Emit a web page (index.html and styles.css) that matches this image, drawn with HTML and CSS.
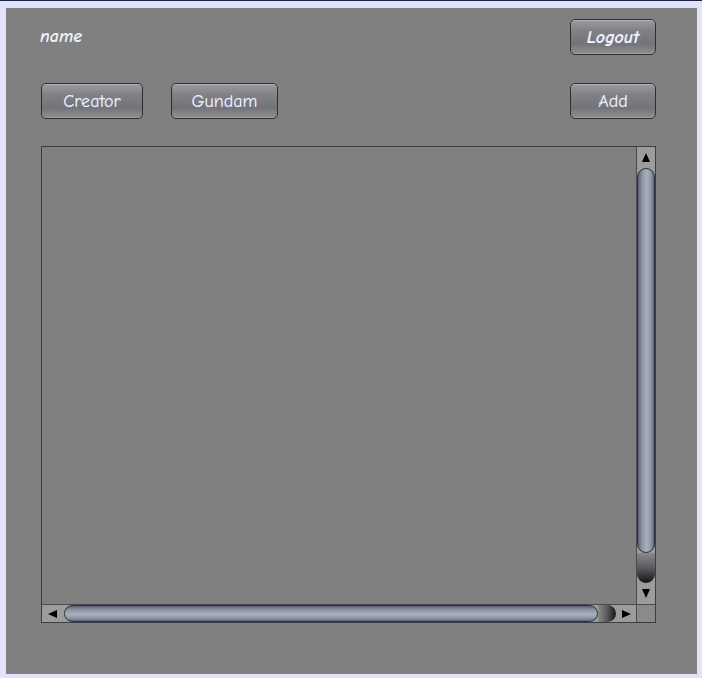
FILE: index.html
```html
<!DOCTYPE html>
<html>
<head>
<meta charset="utf-8">
<link rel="stylesheet" href="styles.css">
</head>
<body>
<div class="frame">
  <div class="panel">
    <div class="row top">
      <span class="name">name</span>
      <button class="btn btn-logout">Logout</button>
    </div>
    <div class="row second">
      <div class="left-btns">
        <button class="btn btn-creator">Creator</button>
        <button class="btn btn-gundam">Gundam</button>
      </div>
      <button class="btn btn-add">Add</button>
    </div>
    <div class="pane">
      <div class="view"></div>
      <div class="vbar">
        <div class="arrow-btn"><span class="tri up"></span></div>
        <div class="vtrack">
          <div class="vthumb"></div>
          <div class="vshade"></div>
        </div>
        <div class="arrow-btn"><span class="tri down"></span></div>
      </div>
      <div class="hbar">
        <div class="arrow-btn h"><span class="tri left"></span></div>
        <div class="htrack">
          <div class="hthumb"></div>
          <div class="hshade"></div>
        </div>
        <div class="arrow-btn h"><span class="tri right"></span></div>
      </div>
      <div class="corner"></div>
    </div>
  </div>
</div>
</body>
</html>
```

FILE: styles.css
```css
html, body {
  margin: 0;
  padding: 0;
  background: #e2e2fa;
}
body {
  width: 702px;
  height: 678px;
  overflow: hidden;
}
.frame {
  border-top: 1px solid #1b2240;
  padding: 7px 5px 4px 6px;
  box-sizing: border-box;
  height: 678px;
}
.panel {
  background: #808080;
  height: 666px;
  box-sizing: border-box;
  padding: 11px 41px 0 35px;
  font-family: "Comic Sans MS", "Comic Neue", "DejaVu Sans", sans-serif;
  color: #eef2ff;
}
.row {
  display: flex;
  justify-content: space-between;
  align-items: center;
}
.left-btns {
  display: flex;
  gap: 28px;
}
.second {
  margin-top: 28px;
}
.name {
  font-weight: bold;
  font-style: italic;
  font-size: 18px;
  margin-left: -1px;
  margin-top: -2px;
}
.btn {
  height: 36px;
  border: 1px solid #2e2e32;
  border-radius: 5px;
  background: linear-gradient(to bottom, #9c9ca0 0%, #828286 30%, #747478 70%, #909094 100%);
  box-shadow: inset 0 1px 0 rgba(255,255,255,0.25), inset 0 -1px 0 rgba(255,255,255,0.15);
  color: #eef2ff;
  font-family: "Comic Sans MS", "Comic Neue", "DejaVu Sans", sans-serif;
  font-size: 18px;
  padding: 0;
  text-shadow: 0 0 1px rgba(180,200,255,0.5);
}
.btn-logout {
  width: 86px;
  font-weight: bold;
  font-style: italic;
}
.btn-add { width: 86px; }
.btn-creator { width: 102px; }
.btn-gundam { width: 107px; }

.pane {
  margin-top: 27px;
  width: 615px;
  height: 477px;
  box-sizing: border-box;
  border: 1px solid #3c3c44;
  display: grid;
  grid-template-columns: 1fr 19px;
  grid-template-rows: 1fr 18px;
}
.view {
  background: #808080;
}
.vbar {
  border-left: 1px solid #4a4a50;
  background: #8a8a8a;
  display: flex;
  flex-direction: column;
}
.hbar {
  border-top: 1px solid #4a4a50;
  background: #8a8a8a;
  display: flex;
}
.corner {
  background: #8a8a8a;
  border-top: 1px solid #4a4a50;
  border-left: 1px solid #4a4a50;
}
.arrow-btn {
  height: 21px;
  flex: none;
  display: flex;
  align-items: center;
  justify-content: center;
  background: #9c9c9c;
}
.arrow-btn.h {
  height: auto;
  width: 20px;
}
.tri {
  width: 0;
  height: 0;
  border-style: solid;
}
.tri.up { border-width: 0 4.5px 9px 4.5px; border-color: transparent transparent #000 transparent; }
.tri.down { border-width: 9px 4.5px 0 4.5px; border-color: #000 transparent transparent transparent; }
.tri.left { border-width: 4.5px 9px 4.5px 0; border-color: transparent #000 transparent transparent; }
.tri.right { border-width: 4.5px 0 4.5px 9px; border-color: transparent transparent transparent #000; }

.vtrack {
  flex: 1;
  display: flex;
  flex-direction: column;
  background: #9c9c9c;
}
.vthumb {
  height: 385px;
  flex: none;
  box-sizing: border-box;
  border: 1px solid #2e3038;
  border-radius: 10px;
  background: linear-gradient(to right, #5a6070 0%, #8c94a4 25%, #a8b0c0 55%, #9098a8 80%, #606676 100%);
}
.vshade {
  flex: 1;
  border-radius: 0 0 10px 10px;
  background: linear-gradient(to bottom, #8a8a8a 0%, #5a5a5e 50%, #141416 100%);
}
.htrack {
  flex: 1;
  display: flex;
  background: #9c9c9c;
  padding-left: 2px;
}
.hthumb {
  width: 534px;
  flex: none;
  box-sizing: border-box;
  border: 1px solid #2e3038;
  border-radius: 10px;
  background: linear-gradient(to bottom, #5a6070 0%, #8c94a4 25%, #a8b0c0 55%, #9098a8 80%, #606676 100%);
}
.hshade {
  flex: 1;
  border-radius: 0 10px 10px 0;
  background: linear-gradient(to right, #8a8a8a 0%, #5a5a5e 50%, #141416 100%);
}
```
